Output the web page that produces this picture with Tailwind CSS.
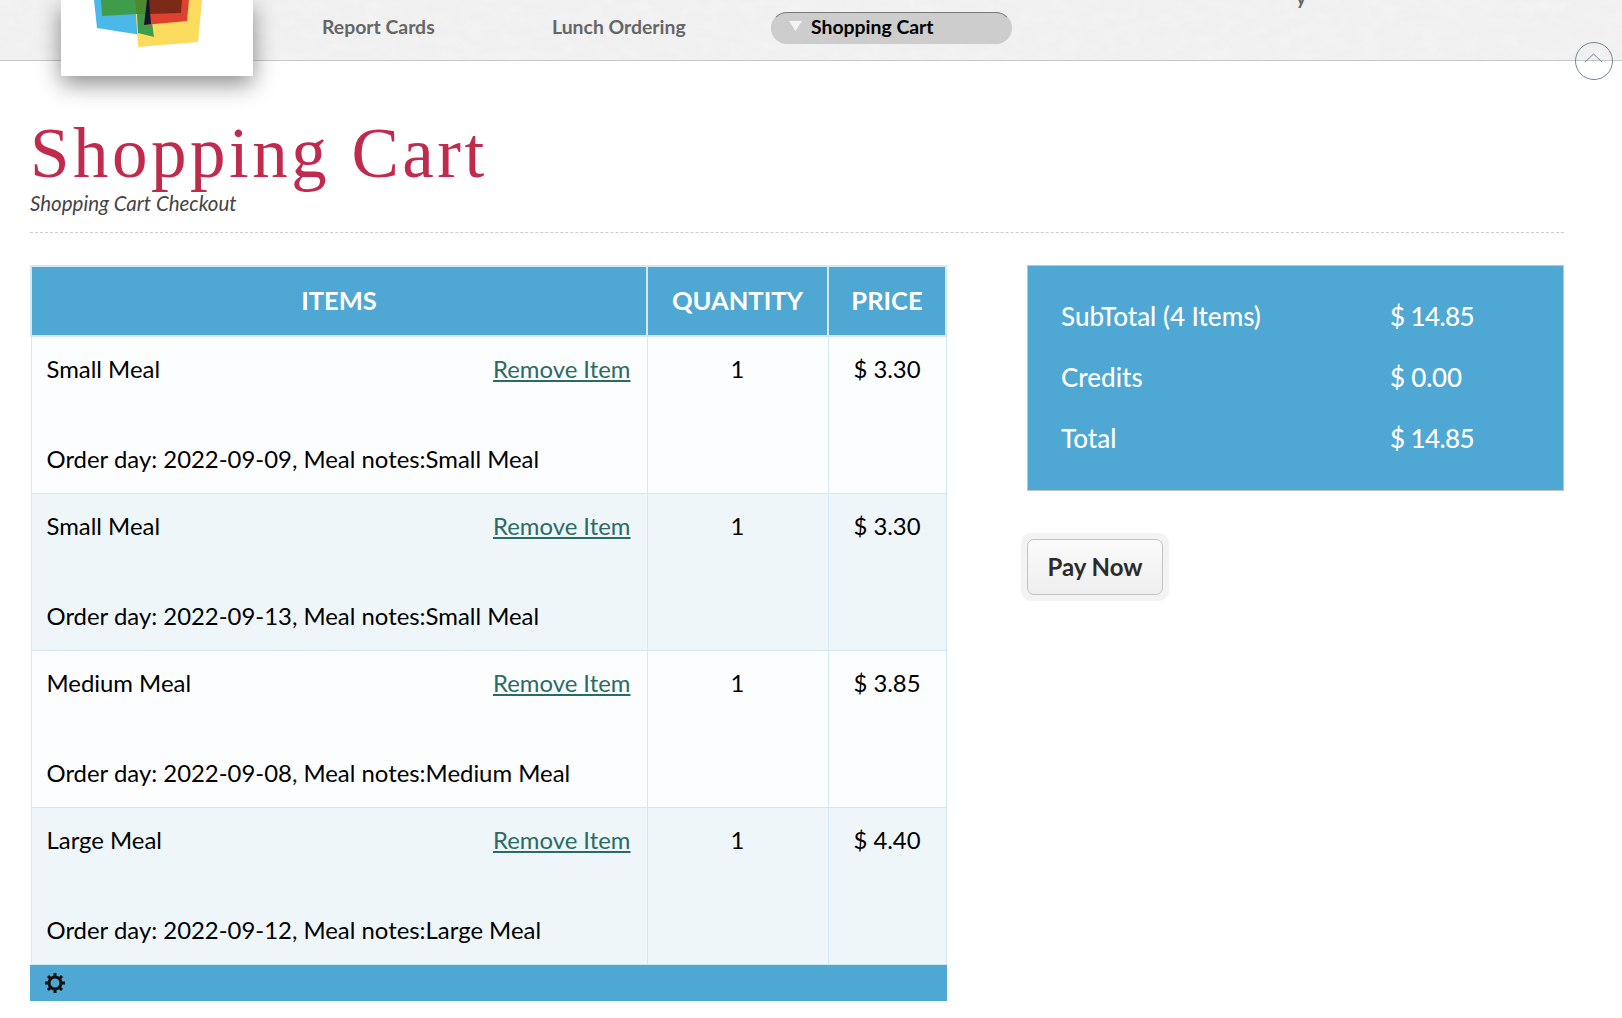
<!DOCTYPE html>
<html lang="en">
<head>
  <meta charset="UTF-8">
  <title>Shopping Cart</title>
  <script src="https://cdn.jsdelivr.net/npm/@tailwindcss/browser@4"></script>
</head>
<body class="bg-white font-['Lato',sans-serif] text-black overflow-hidden h-[1018px]">
  <!-- top nav -->
  <header class="relative h-[61px] bg-[#f0f0f0] border-b border-[#c8c8c8] flex items-center pl-[322px] pb-[6px] text-[19.4px] font-bold text-[#666]">
    <!-- paper texture -->
    <svg class="absolute left-0 top-0 opacity-30" width="1622" height="60">
      <filter id="paper"><feTurbulence type="fractalNoise" baseFrequency="0.05 0.08" numOctaves="4" seed="4"/><feColorMatrix values="0 0 0 0 1  0 0 0 0 1  0 0 0 0 1  1.6 0 0 0 -0.6"/></filter>
      <rect width="1622" height="60" filter="url(#paper)"/>
    </svg>
    <span class="absolute left-[1296px] top-[-17px]">y</span>
    <a class="relative w-[230px]">Report Cards</a>
    <a class="relative w-[219px]">Lunch Ordering</a>
    <a class="relative w-[241px] h-[32px] mt-[2px] pb-[2px] rounded-full bg-[#cdcdcd] border border-[#ccc] border-t-[#777] flex items-center pl-[17px] gap-[9px] text-black">
      <svg class="w-[13px] h-[10px] mb-[2px]" viewBox="0 0 13 10"><polygon points="0,0 13,0 6.5,10" fill="#f4f4f4"/></svg>
      Shopping Cart
    </a>
    <!-- logo -->
    <div class="absolute left-[61px] top-0 w-[192px] h-[76px] bg-white shadow-[0_8px_22px_rgba(0,0,0,0.45)]">
      <svg class="absolute left-0 top-0" width="192" height="60" viewBox="61 0 192 60">
        <polygon points="94,0 97,28 154,37 149,0" fill="#4bb8ea"/>
        <polygon points="138,47 198,42 202,0 135,0" fill="#fbdc5e"/>
        <polygon points="101,0 102,16 137,14 138,33 154,37 149,0" fill="#3f9c4a"/>
        <polygon points="147,0 144,25 187,21 189,0" fill="#e0402f"/>
        <polygon points="135,0 137,14 146,14 147,0" fill="#4d8a2b"/>
        <polygon points="149,14 181,13 182,0 148,0" fill="#7a2a16"/>
        <polygon points="147,0 144,25 151,24 149,0" fill="#0d1a33"/>
      </svg>
    </div>
    <!-- back to top -->
    <div class="absolute right-[9px] top-[42px] w-[38px] h-[38px] rounded-full border border-[#6f8a97] flex items-center justify-center">
      <svg class="w-[20px] h-[12px] mb-[6px]" viewBox="0 0 20 12" fill="none" stroke="#6f8a97" stroke-width="1"><path d="M1 10 L9.5 2 L18 10"/></svg>
    </div>
  </header>

  <main class="px-[30px] pt-[57px] pr-[58px]">
    <h1 class="font-['Liberation_Serif',serif] text-[71px] leading-[70px] tracking-[3.5px] text-[#bf2a4d] font-normal">Shopping Cart</h1>
    <p class="italic text-[20.5px] leading-[24px] text-[#444] mt-[3px]">Shopping Cart Checkout</p>
    <div class="border-b border-dashed border-[#ccc] mt-[17px]"></div>

    <div class="flex justify-between items-start mt-[32px]">
      <div class="w-[917px]">
        <table class="w-full border-collapse table-fixed text-[23.9px] leading-[30px] bg-white">
          <thead>
            <tr class="h-[70px] bg-[#4fa7d3] text-white text-[25.5px] font-bold">
              <th class="w-[616px] border-2 border-[#d3e8f2] font-bold pb-[2px]">ITEMS</th>
              <th class="w-[181px] border-2 border-[#d3e8f2] font-bold pb-[2px]">QUANTITY</th>
              <th class="border-2 border-[#d3e8f2] font-bold pb-[2px]">PRICE</th>
            </tr>
          </thead>
          <tbody>
            <tr class="h-[157px] bg-[#fcfdff]">
              <td class="border border-[#d3e8f2] align-top pt-[17px] pl-[15px] pr-[16px]">
                <div class="flex justify-between"><span>Small Meal</span><a class="text-[#2a6b65] underline">Remove Item</a></div>
                <div class="mt-[60px]">Order day: 2022-09-09, Meal notes:Small Meal</div>
              </td>
              <td class="border border-[#d3e8f2] align-top pt-[17px] text-center">1</td>
              <td class="border border-[#d3e8f2] align-top pt-[17px] text-center">$ 3.30</td>
            </tr>
            <tr class="h-[157px] bg-[#eff6f9]">
              <td class="border border-[#d3e8f2] align-top pt-[17px] pl-[15px] pr-[16px]">
                <div class="flex justify-between"><span>Small Meal</span><a class="text-[#2a6b65] underline">Remove Item</a></div>
                <div class="mt-[60px]">Order day: 2022-09-13, Meal notes:Small Meal</div>
              </td>
              <td class="border border-[#d3e8f2] align-top pt-[17px] text-center">1</td>
              <td class="border border-[#d3e8f2] align-top pt-[17px] text-center">$ 3.30</td>
            </tr>
            <tr class="h-[157px] bg-[#fcfdff]">
              <td class="border border-[#d3e8f2] align-top pt-[17px] pl-[15px] pr-[16px]">
                <div class="flex justify-between"><span>Medium Meal</span><a class="text-[#2a6b65] underline">Remove Item</a></div>
                <div class="mt-[60px]">Order day: 2022-09-08, Meal notes:Medium Meal</div>
              </td>
              <td class="border border-[#d3e8f2] align-top pt-[17px] text-center">1</td>
              <td class="border border-[#d3e8f2] align-top pt-[17px] text-center">$ 3.85</td>
            </tr>
            <tr class="h-[157px] bg-[#eff6f9]">
              <td class="border border-[#d3e8f2] align-top pt-[17px] pl-[15px] pr-[16px]">
                <div class="flex justify-between"><span>Large Meal</span><a class="text-[#2a6b65] underline">Remove Item</a></div>
                <div class="mt-[60px]">Order day: 2022-09-12, Meal notes:Large Meal</div>
              </td>
              <td class="border border-[#d3e8f2] align-top pt-[17px] text-center">1</td>
              <td class="border border-[#d3e8f2] align-top pt-[17px] text-center">$ 4.40</td>
            </tr>
          </tbody>
        </table>
        <div class="h-[36px] bg-[#4fa7d3] flex items-center pl-[15px]">
          <svg class="w-[20px] h-[20px]" viewBox="0 0 20 20"><circle cx="10" cy="10" r="6" fill="none" stroke="#111" stroke-width="3"/><g stroke="#111" stroke-width="3"><path d="M10 0v4M10 16v4M0 10h4M16 10h4M3 3l2.5 2.5M14.5 14.5L17 17M3 17l2.5-2.5M14.5 5.5L17 3"/></g></svg>
        </div>
      </div>

      <div class="w-[537px]">
        <div class="h-[226px] bg-[#4fa7d3] border border-[#bcc5ca] text-white text-[26px] font-medium px-[33px] pt-[32px]">
          <div class="grid grid-cols-[329px_1fr] gap-y-[25px] leading-[36px]">
            <span>SubTotal (4 Items)</span><span class="tracking-[-0.6px]">$ 14.85</span>
            <span>Credits</span><span class="tracking-[-0.2px]">$ 0.00</span>
            <span>Total</span><span class="tracking-[-0.6px]">$ 14.85</span>
          </div>
        </div>
        <div class="mt-[42px] inline-block rounded-[10px] bg-[#f3f3f3] p-[6px] -ml-[6px]">
          <button class="w-[136px] h-[56px] rounded-[7px] border border-[#c4c4c4] bg-gradient-to-b from-[#fbfbfb] to-[#eee] text-[24px] font-bold text-[#2b2b2b]">Pay Now</button>
        </div>
      </div>
    </div>
  </main>
</body>
</html>
